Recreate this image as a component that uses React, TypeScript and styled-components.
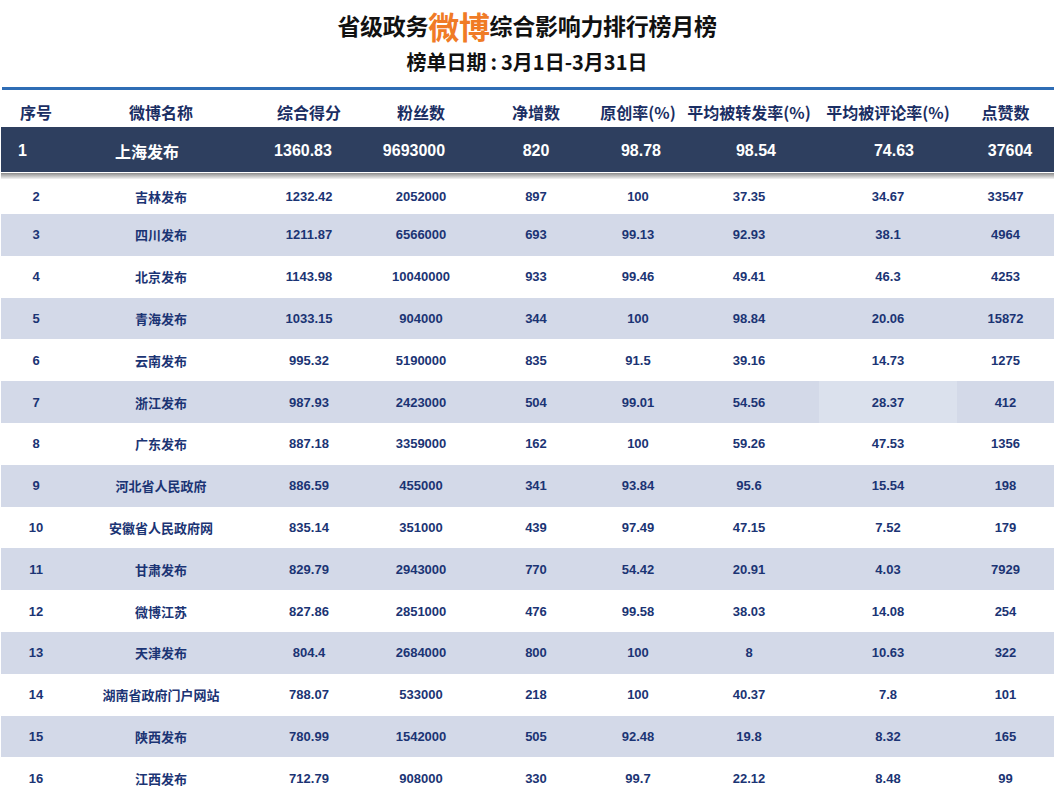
import React from 'react'
import styled, { createGlobalStyle } from 'styled-components'

const GlobalStyle = createGlobalStyle`
  body {
    margin: 0;
    background: #ffffff;
    font-family: 'Liberation Sans', 'Noto Sans CJK SC', sans-serif;
  }
`

const COLS = '70px 180px 116px 108px 122px 82px 140px 138px 97px'
// the leader row is laid out a little differently in the original chart
const TOP_COLS = '60px 172px 140px 82px 162px 48px 182px 94px 138px'

const Page = styled.div`
  width: 1054px;
  height: 797px;
  overflow: hidden;
`

const Header = styled.div`
  display: flex;
  flex-direction: column;
  align-items: center;
  padding-top: 7px;
`

const Title = styled.h1`
  margin: 0;
  height: 36px;
  display: flex;
  align-items: center;
  font-size: 23px;
  font-weight: bold;
  color: #111;
  font-family: 'Noto Sans CJK SC', sans-serif;
  letter-spacing: -0.3px;
`

const Accent = styled.span`
  font-size: 31px;
  color: #f07b26;
`

const Subtitle = styled.h2`
  margin: 0;
  height: 37px;
  display: flex;
  align-items: center;
  font-size: 20px;
  font-weight: bold;
  color: #111;
  font-family: 'Noto Sans CJK SC', sans-serif;
`

const Colon = styled.span`
  margin: 0 4px;
`

const BlueRule = styled.div`
  margin: 7px 0 0 2px;
  height: 3px;
  background: #2f6db5;
`

type Variant = 'head' | 'top' | 'stripe' | 'plain'

const Row = styled.div<{ $variant?: Variant }>`
  display: grid;
  grid-template-columns: ${(p) => (p.$variant === 'top' ? TOP_COLS : COLS)};
  margin-left: 1px;
  align-items: center;
  box-sizing: border-box;
  height: ${(p) =>
    p.$variant === 'head' ? '37px' : p.$variant === 'top' ? '45px' : '41.8px'};
  padding-top: ${(p) => (p.$variant === 'head' ? '6px' : p.$variant === 'top' ? '3px' : '0')};
  background: ${(p) =>
    p.$variant === 'top' ? '#2e3f5f' : p.$variant === 'stripe' ? '#d3d9e8' : '#fff'};
  color: ${(p) => (p.$variant === 'top' ? '#fff' : '#1b3474')};
  font-weight: bold;
  font-size: ${(p) => (p.$variant === 'head' || p.$variant === 'top' ? '16px' : '13px')};
`

const Cell = styled.div<{ $light?: boolean; $align?: 'left' | 'center' }>`
  height: 100%;
  display: flex;
  align-items: center;
  justify-content: ${(p) => (p.$align === 'left' ? 'flex-start' : 'center')};
  padding-left: ${(p) => (p.$align === 'left' ? '17px' : '0')};
  background: ${(p) => (p.$light ? '#dbe1ed' : 'transparent')};
  white-space: nowrap;
`

const HeadCell = styled(Cell)`
  font-family: 'Noto Sans CJK SC', sans-serif;
  color: #1a2e63;
`

const Shadow = styled.div`
  margin: 1px 0 0 1px;
  height: 6px;
  background: linear-gradient(#8c8c8c, #c9c9c9 60%, #f4f4f4);
`

const SecondRow = styled(Row)`
  height: 35px;
`

const headers = ['序号', '微博名称', '综合得分', '粉丝数', '净增数', '原创率(%)', '平均被转发率(%)', '平均被评论率(%)', '点赞数']

const top = ['1', '上海发布', '1360.83', '9693000', '820', '98.78', '98.54', '74.63', '37604']

const rows: string[][] = [
  ['2', '吉林发布', '1232.42', '2052000', '897', '100', '37.35', '34.67', '33547'],
  ['3', '四川发布', '1211.87', '6566000', '693', '99.13', '92.93', '38.1', '4964'],
  ['4', '北京发布', '1143.98', '10040000', '933', '99.46', '49.41', '46.3', '4253'],
  ['5', '青海发布', '1033.15', '904000', '344', '100', '98.84', '20.06', '15872'],
  ['6', '云南发布', '995.32', '5190000', '835', '91.5', '39.16', '14.73', '1275'],
  ['7', '浙江发布', '987.93', '2423000', '504', '99.01', '54.56', '28.37', '412'],
  ['8', '广东发布', '887.18', '3359000', '162', '100', '59.26', '47.53', '1356'],
  ['9', '河北省人民政府', '886.59', '455000', '341', '93.84', '95.6', '15.54', '198'],
  ['10', '安徽省人民政府网', '835.14', '351000', '439', '97.49', '47.15', '7.52', '179'],
  ['11', '甘肃发布', '829.79', '2943000', '770', '54.42', '20.91', '4.03', '7929'],
  ['12', '微博江苏', '827.86', '2851000', '476', '99.58', '38.03', '14.08', '254'],
  ['13', '天津发布', '804.4', '2684000', '800', '100', '8', '10.63', '322'],
  ['14', '湖南省政府门户网站', '788.07', '533000', '218', '100', '40.37', '7.8', '101'],
  ['15', '陕西发布', '780.99', '1542000', '505', '92.48', '19.8', '8.32', '165'],
  ['16', '江西发布', '712.79', '908000', '330', '99.7', '22.12', '8.48', '99'],
]

const App: React.FC = (): React.ReactElement => (
  <Page>
    <GlobalStyle />
    <Header>
      <Title>
        省级政务<Accent>微博</Accent>综合影响力排行榜月榜
      </Title>
      <Subtitle>
        榜单日期<Colon>:</Colon>3月1日-3月31日
      </Subtitle>
    </Header>
    <BlueRule />

    <Row $variant="head">
      {headers.map((h) => (
        <HeadCell key={h}>{h}</HeadCell>
      ))}
    </Row>

    <Row $variant="top">
      {top.map((v, i) => (
        <Cell key={i} $align={i === 0 ? 'left' : 'center'}>
          {v}
        </Cell>
      ))}
    </Row>
    <Shadow />

    {rows.map((r, ri) => {
      const RowComp = ri === 0 ? SecondRow : Row
      return (
        <RowComp key={r[0]} $variant={ri % 2 === 1 ? 'stripe' : 'plain'}>
          {r.map((v, i) => (
            <Cell key={i} $light={r[0] === '7' && i === 7}>
              {v}
            </Cell>
          ))}
        </RowComp>
      )
    })}
  </Page>
)

export default App
